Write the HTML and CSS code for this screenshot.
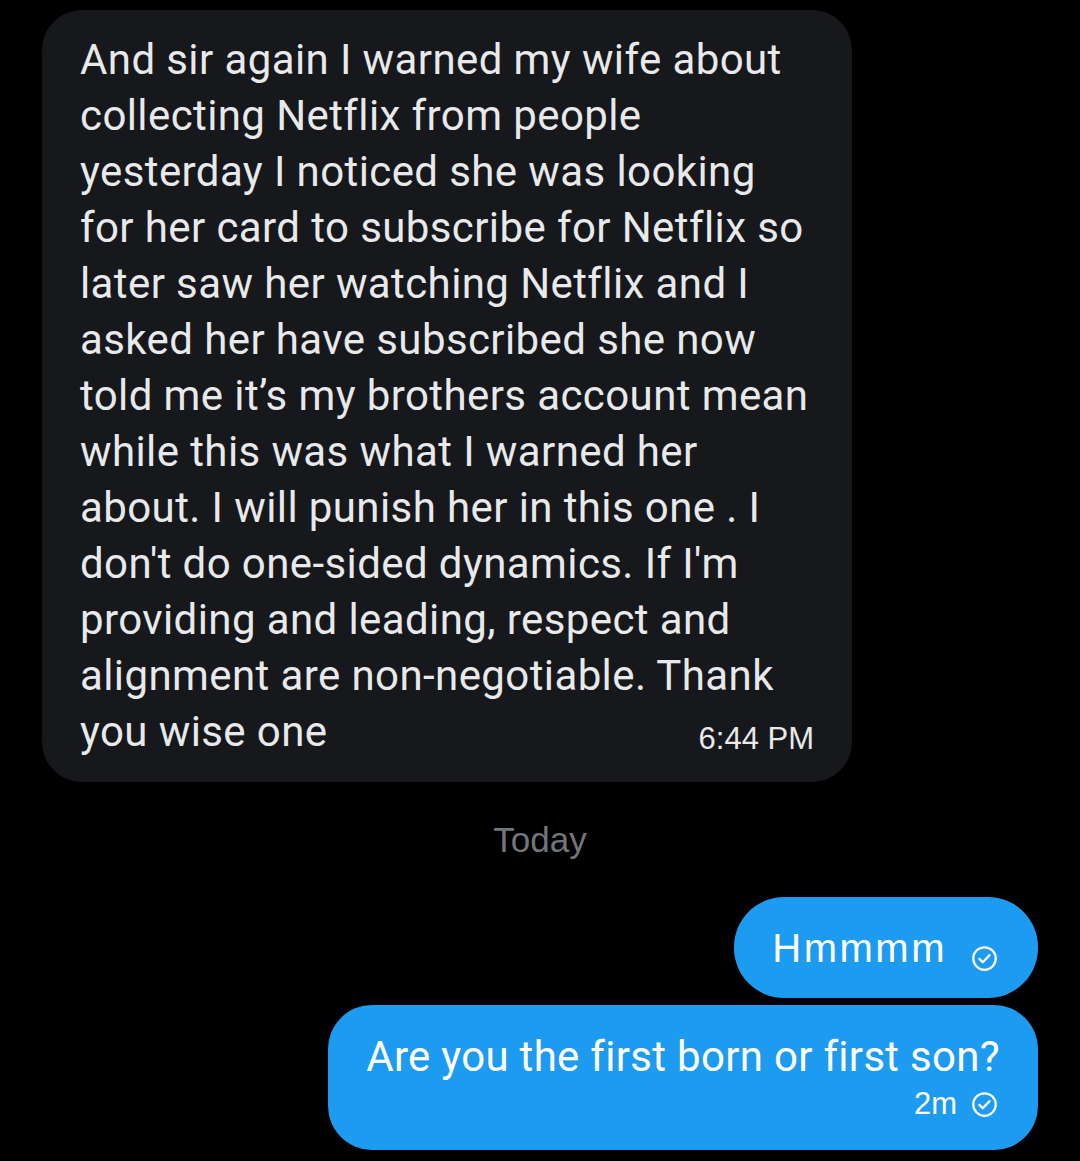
FILE: index.html
```html
<!DOCTYPE html>
<html>
<head>
<meta charset="utf-8">
<link rel="stylesheet" href="styles.css">
</head>
<body>
<div class="chat">
  <div class="bubble-in">
    <p class="msg">And sir again I warned my wife about<br>collecting Netflix from people<br>yesterday I noticed she was looking<br>for her card to subscribe for Netflix so<br>later saw her watching Netflix and I<br>asked her have subscribed she now<br>told me it’s my brothers account mean<br>while this was what I warned her<br>about. I will punish her in this one . I<br>don't do one-sided dynamics. If I'm<br>providing and leading, respect and<br>alignment are non-negotiable. Thank<br>you wise one<span class="time">6:44 PM</span></p>
  </div>
  <div class="day">Today</div>
  <div class="out-list">
    <div class="bubble-out short">
      <span class="out-text">Hmmmm</span>
      <svg class="check big" viewBox="0 0 24 24"><circle cx="12" cy="12" r="10" fill="none" stroke="#fff" stroke-width="2"/><path d="M7.5 12.3l3 3 6-6.3" fill="none" stroke="#fff" stroke-width="2" stroke-linecap="round" stroke-linejoin="round"/></svg>
    </div>
    <div class="bubble-out long">
      <div class="out-text">Are you the first born or first son?</div>
      <div class="meta"><span>2m</span><svg class="check" viewBox="0 0 24 24"><circle cx="12" cy="12" r="10" fill="none" stroke="#fff" stroke-width="2"/><path d="M7.5 12.3l3 3 6-6.3" fill="none" stroke="#fff" stroke-width="2" stroke-linecap="round" stroke-linejoin="round"/></svg></div>
    </div>
  </div>
</div>
</body>
</html>
```
FILE: styles.css
```css
html, body {
  margin: 0;
  padding: 0;
  background: #000;
}
.chat {
  width: 1080px;
  height: 1161px;
  overflow: hidden;
  padding-top: 10px;
  box-sizing: border-box;
  font-family: Roboto, "Liberation Sans", sans-serif;
}
.bubble-in {
  margin-left: 42px;
  width: 810px;
  box-sizing: border-box;
  background: #16181c;
  border-radius: 40px;
  padding: 22px 38px 22px 38px;
}
.msg {
  margin: 0;
  color: #e7e9ea;
  font-size: 42px;
  letter-spacing: 0.4px;
  line-height: 56px;
  white-space: nowrap;
}
.time {
  float: right;
  font-family: "Liberation Sans", Arial, sans-serif;
  font-size: 31px;
  letter-spacing: 0;
  color: #e7e9ea;
  line-height: 70px;
}
.day {
  text-align: center;
  color: #71767b;
  font-family: "Liberation Sans", Arial, sans-serif;
  font-size: 35px;
  margin-top: 36px;
  line-height: 44px;
}
.out-list {
  display: flex;
  flex-direction: column;
  align-items: flex-end;
  gap: 7px;
  margin-top: 35px;
  padding-right: 42px;
}
.bubble-out {
  background: #1d9bf0;
  color: #fff;
  border-radius: 50px;
  box-sizing: border-box;
}
.short {
  height: 101px;
  padding: 0 40px 0 38px;
  display: flex;
  align-items: center;
  gap: 24px;
}
.short .out-text {
  font-family: "Liberation Sans", Arial, sans-serif;
  font-size: 40px;
  letter-spacing: 2.5px;
  line-height: 50px;
  margin-top: 1px;
}
.check {
  width: 27px;
  height: 27px;
  display: block;
}
.check.big {
  margin-top: 21px;
}
.long {
  width: 710px;
  height: 145px;
  border-radius: 44px;
  padding: 27px 38px 0 38px;
  text-align: right;
}
.long .out-text {
  font-size: 42px;
  letter-spacing: 0.3px;
  line-height: 50px;
}
.meta {
  display: flex;
  justify-content: flex-end;
  align-items: center;
  gap: 14px;
  font-family: "Liberation Sans", Arial, sans-serif;
  font-size: 31px;
  line-height: 40px;
  margin-top: 2px;
  padding-right: 2px;
}
```
